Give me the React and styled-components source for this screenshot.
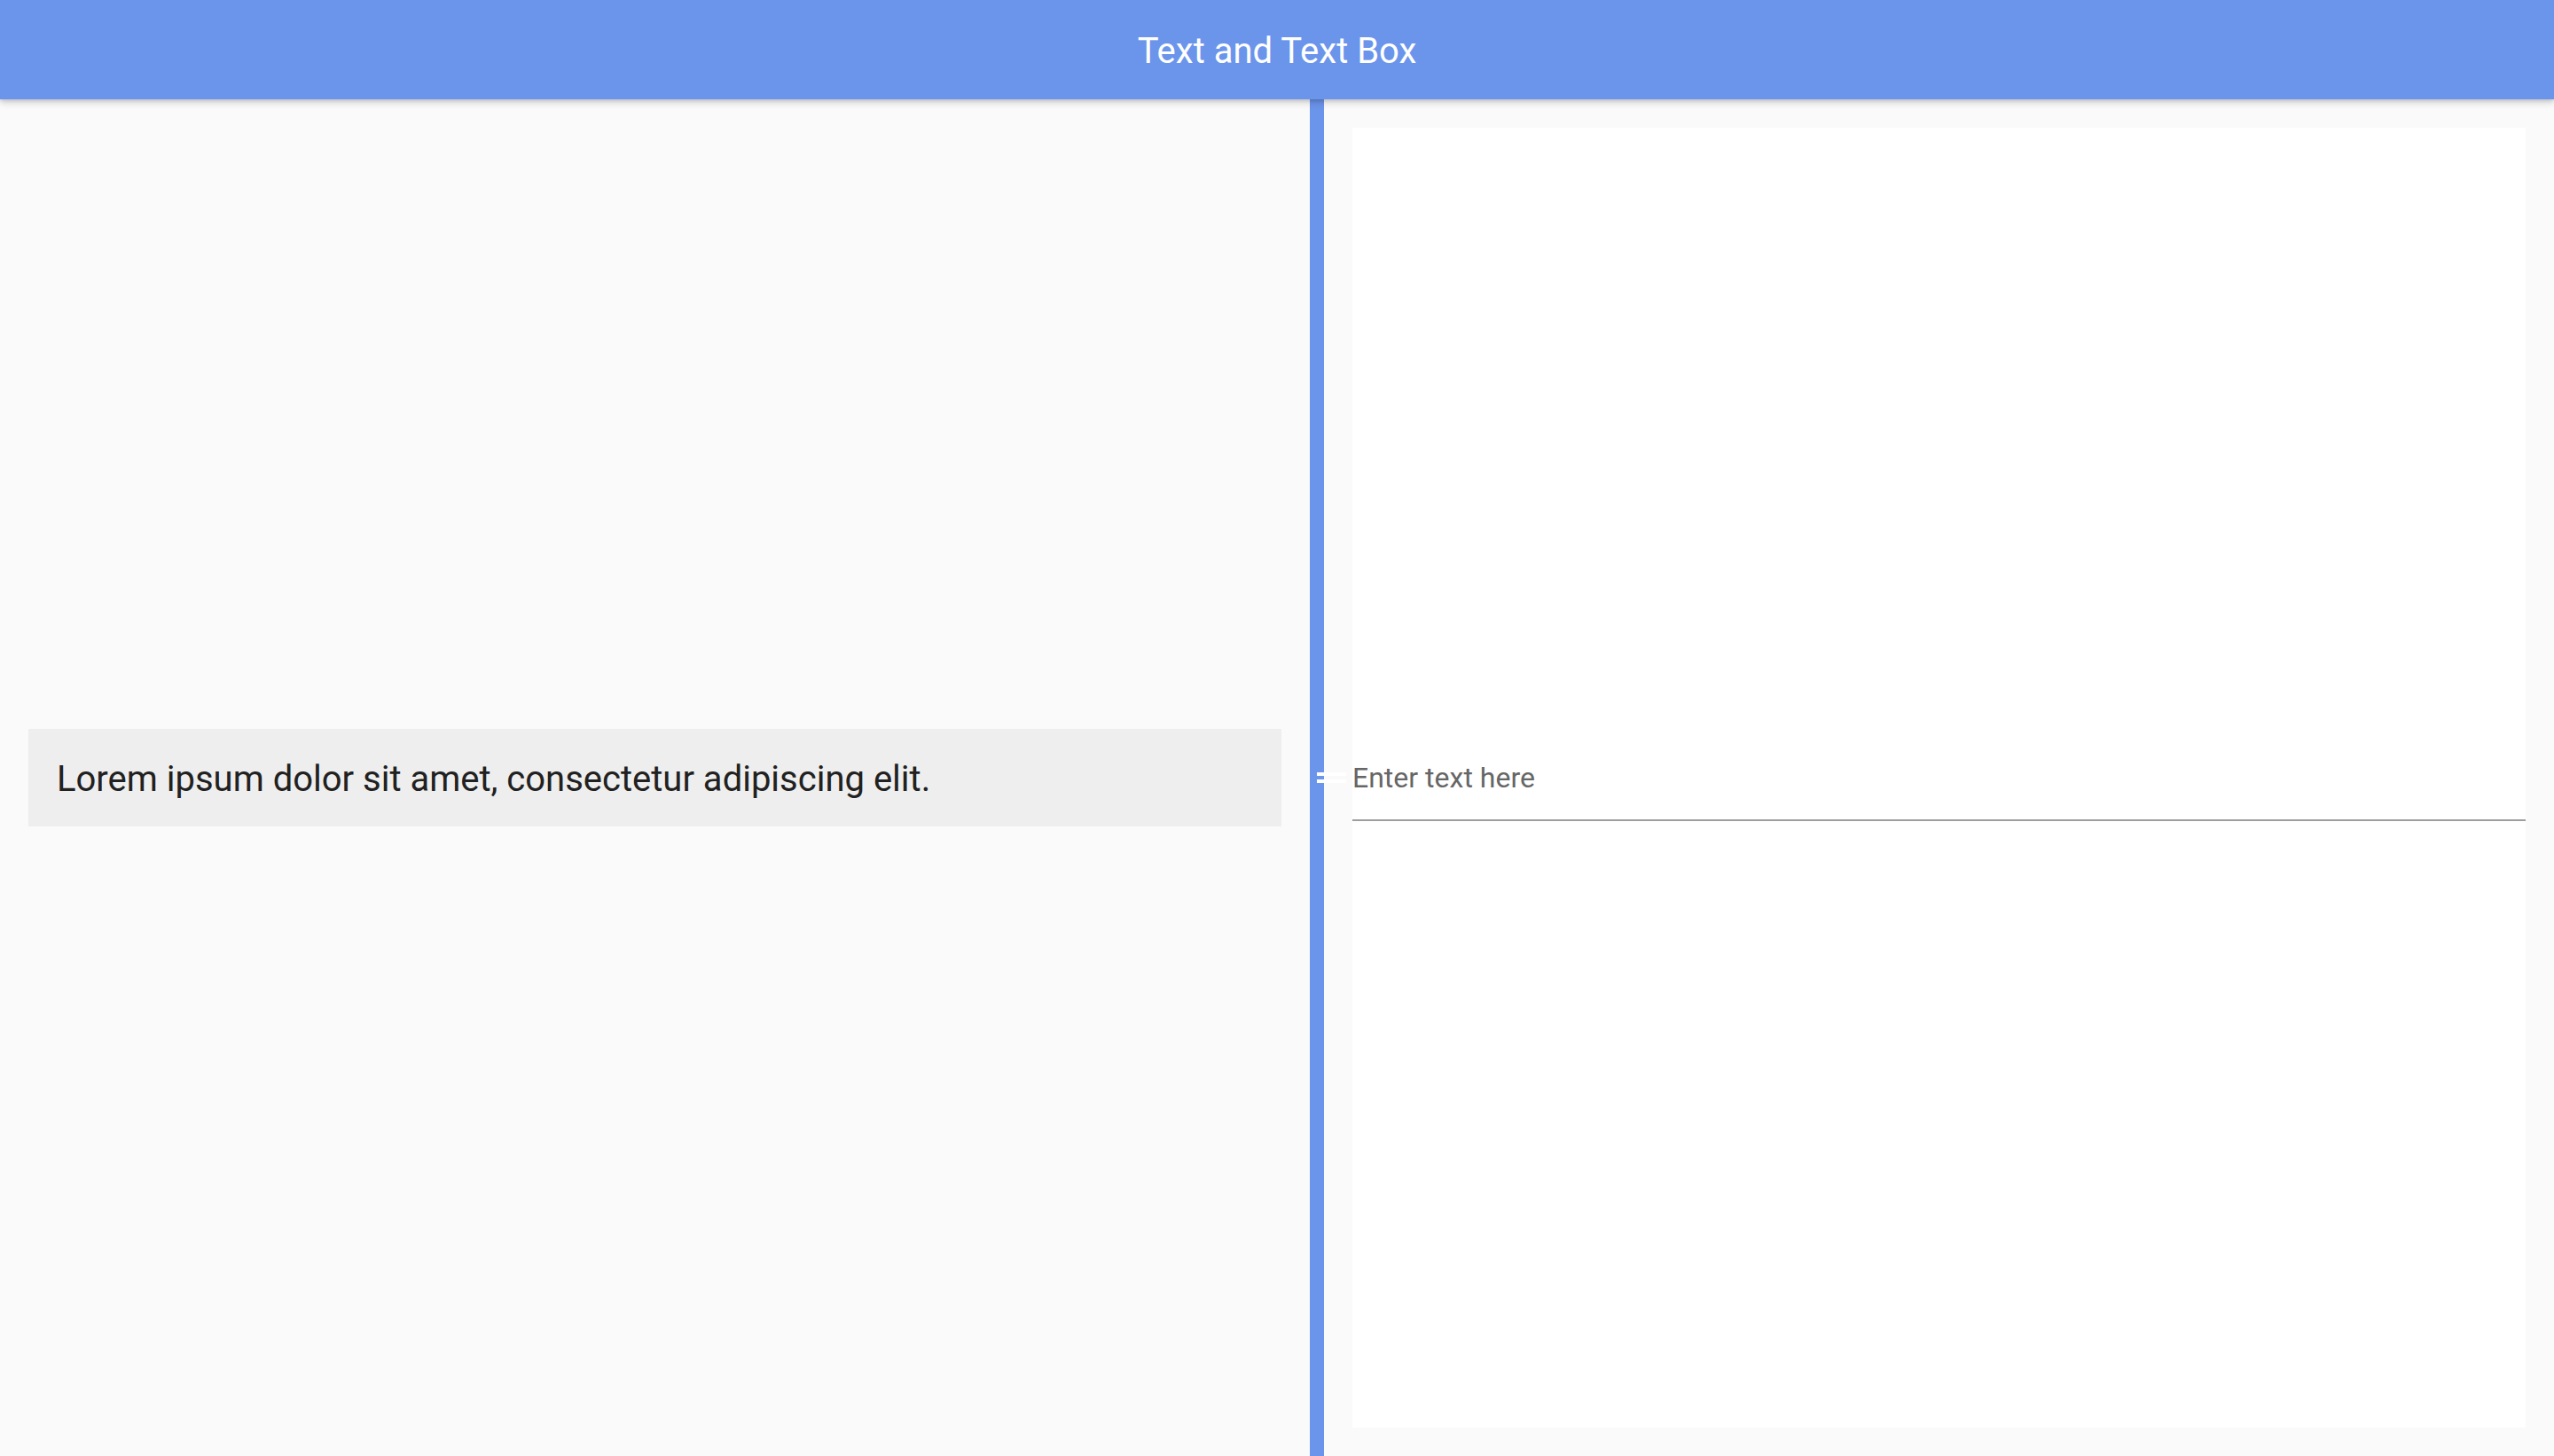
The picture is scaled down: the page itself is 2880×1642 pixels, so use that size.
import styled, { createGlobalStyle } from "styled-components";

const GlobalStyle = createGlobalStyle`
    html, body {
        margin: 0;
        padding: 0;
        background-color: #fafafa;
        font-family: Roboto, "Liberation Sans", sans-serif;
    }
`;

function App() {
    return (
        <Screen>
            <GlobalStyle />
            <Header>
                <Title>Text and Text Box</Title>
            </Header>
            <Main>
                <LeftPane>
                    <TextBox>
                        Lorem ipsum dolor sit amet, consectetur adipiscing elit.
                    </TextBox>
                </LeftPane>
                <Divider>
                    <Handle />
                </Divider>
                <RightPane>
                    <Card>
                        <Field>
                            <Input placeholder="Enter text here" />
                        </Field>
                    </Card>
                </RightPane>
            </Main>
        </Screen>
    );
}

const Screen = styled.div`
    height: 100vh;
    display: flex;
    flex-direction: column;
    overflow: hidden;
`;

const Header = styled.header`
    height: 112px;
    flex-shrink: 0;
    box-sizing: border-box;
    padding-top: 3px;
    display: flex;
    align-items: center;
    justify-content: center;
    background-color: #6b94eb;
    box-shadow: 0 4px 8px rgba(0, 0, 0, 0.14), 0 2px 4px rgba(0, 0, 0, 0.12);
    position: relative;
    z-index: 2;
`;

const Title = styled.h1`
    margin: 0;
    font-size: 40px;
    font-weight: 400;
    color: #ffffff;
`;

const Main = styled.main`
    flex: 1;
    display: flex;
    min-height: 0;
`;

const LeftPane = styled.section`
    width: 1477px;
    flex-shrink: 0;
    box-sizing: border-box;
    padding: 0 32px;
    display: flex;
    align-items: center;
`;

const TextBox = styled.div`
    width: 100%;
    box-sizing: border-box;
    padding: 34px 32px 30px;
    background-color: #eeeeee;
    color: #212121;
    font-size: 40px;
    line-height: 46px;
`;

const Divider = styled.div`
    width: 16px;
    flex-shrink: 0;
    background-color: #6b94eb;
    position: relative;
`;

const Handle = styled.div`
    position: absolute;
    left: 8px;
    top: 50%;
    width: 33px;
    height: 4px;
    margin-top: -6px;
    border-top: 4px solid #ffffff;
    border-bottom: 4px solid #ffffff;
    z-index: 1;
`;

const RightPane = styled.section`
    flex: 1;
    box-sizing: border-box;
    padding: 32px;
    display: flex;
`;

const Card = styled.div`
    flex: 1;
    background-color: #ffffff;
    display: flex;
    flex-direction: column;
    justify-content: center;
`;

const Field = styled.div`
    height: 96px;
    margin-top: 2px;
    display: flex;
    align-items: center;
    border-bottom: 2px solid #9e9e9e;
    box-sizing: border-box;
`;

const Input = styled.input`
    width: 100%;
    border: none;
    outline: none;
    padding: 0;
    background: transparent;
    font-family: Roboto, "Liberation Sans", sans-serif;
    font-size: 32px;
    color: #212121;

    &::placeholder {
        color: #666666;
    }
`;

export default App;
